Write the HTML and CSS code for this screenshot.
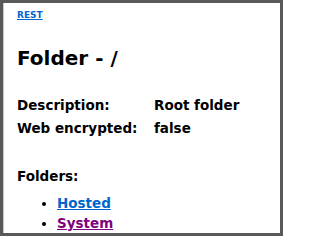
FILE: index.html
```html
<!DOCTYPE html>
<html>
<head>
<meta charset="utf-8">
<link rel="stylesheet" href="styles.css">
</head>
<body>
<div class="frame">
  <a class="rest" href="#">REST</a>
  <h1 class="title">Folder - /</h1>
  <div class="props">
    <div class="label">Description:</div><div class="value">Root folder</div>
    <div class="label">Web encrypted:</div><div class="value">false</div>
  </div>
  <div class="section">Folders:</div>
  <ul class="folders">
    <li><a class="link" href="#">Hosted</a></li>
    <li><a class="link visited" href="#">System</a></li>
  </ul>
</div>
</body>
</html>
```
FILE: styles.css
```css
html, body {
  margin: 0;
  padding: 0;
  background: #ffffff;
}
body {
  overflow: hidden;
  font-family: "DejaVu Sans", Verdana, sans-serif;
  font-weight: bold;
  color: #000;
}
.frame {
  box-sizing: border-box;
  width: 283px;
  height: 236px;
  border: 3px solid #595959;
  box-shadow: inset 1px 0 0 #c8c8c8;
  padding: 7px 0 0 14px;
  overflow: hidden;
}
.rest {
  display: block;
  width: max-content;
  font-size: 9px;
  line-height: 11px;
  color: #0066cc;
  text-decoration: underline;
}
.title {
  margin: 25px 0 0 0;
  font-size: 20px;
  line-height: 24px;
}
.props {
  display: grid;
  grid-template-columns: 137px auto;
  margin-top: 24px;
  font-size: 13.5px;
  line-height: 23px;
}
.section {
  margin-top: 26px;
  font-size: 13.5px;
  line-height: 20px;
}
.folders {
  margin: 7px 0 0 0;
  padding: 0 0 0 40px;
  font-size: 13.5px;
  line-height: 20px;
}
.link { color: #0066cc; }
.link.visited { color: #800080; }
```
